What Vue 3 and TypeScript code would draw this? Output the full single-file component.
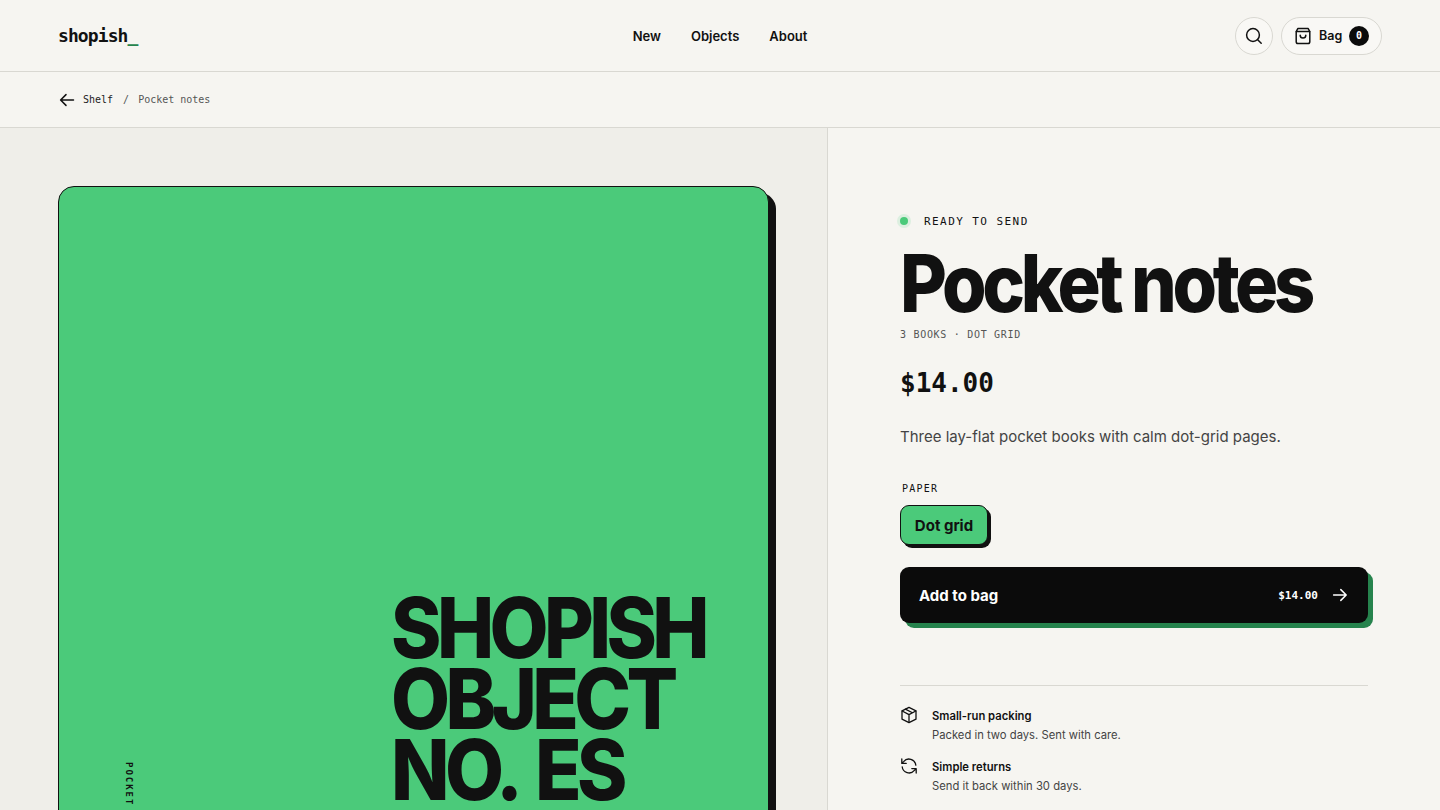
<script setup lang="ts">
import { ref } from 'vue'

interface Perk {
  title: string
  text: string
  icon: 'box' | 'refresh'
}

const navLinks = ref<string[]>(['New', 'Objects', 'About'])
const perks = ref<Perk[]>([
  { title: 'Small-run packing', text: 'Packed in two days. Sent with care.', icon: 'box' },
  { title: 'Simple returns', text: 'Send it back within 30 days.', icon: 'refresh' }
])
</script>

<template>
  <div class="page">
    <header class="topbar">
      <div class="logo">shopish<span>_</span></div>
      <nav class="nav">
        <a v-for="link in navLinks" :key="link">{{ link }}</a>
      </nav>
      <div class="actions">
        <button class="round" aria-label="Search">
          <svg width="18" height="18" viewBox="0 0 18 18" fill="none" stroke="currentColor" stroke-width="1.5" stroke-linecap="round">
            <circle cx="8" cy="8" r="6.4" />
            <path d="M12.7 12.7 16.2 16.2" />
          </svg>
        </button>
        <button class="bag">
          <svg width="18" height="18" viewBox="0 0 18 18" fill="none" stroke="currentColor" stroke-width="1.5" stroke-linecap="round" stroke-linejoin="round">
            <path d="M3.8 1.6h10.4l1.6 3v10.2a1.8 1.8 0 0 1-1.8 1.8H4a1.8 1.8 0 0 1-1.8-1.8V4.6z" />
            <path d="M2.4 4.6h13.2" />
            <path d="M6.2 8.2a2.8 2.8 0 0 0 5.6 0" />
          </svg>
          <span>Bag</span>
          <em>0</em>
        </button>
      </div>
    </header>

    <div class="crumbs">
      <svg width="18" height="18" viewBox="0 0 18 18" fill="none" stroke="currentColor" stroke-width="1.5" stroke-linecap="round" stroke-linejoin="round">
        <path d="M15.5 9H3M8 3.6 2.6 9 8 14.4" />
      </svg>
      <a>Shelf</a>
      <i>/</i>
      <b>Pocket notes</b>
    </div>

    <main class="product">
      <section class="stage">
        <div class="poster">
          <div class="spine">POCKET</div>
          <div class="poster-title">SHOPISH<br />OBJECT<br />NO. ES</div>
        </div>
      </section>

      <section class="details">
        <div class="status"><span class="dot"></span>READY TO SEND</div>
        <h1>Pocket notes</h1>
        <p class="meta">3 BOOKS · DOT GRID</p>
        <p class="price">$14.00</p>
        <p class="lead">Three lay-flat pocket books with calm dot-grid pages.</p>

        <div class="label">PAPER</div>
        <button class="chip">Dot grid</button>

        <button class="add">
          <span class="add-label">Add to bag</span>
          <span class="add-price">$14.00</span>
          <svg width="16" height="16" viewBox="0 0 16 16" fill="none" stroke="currentColor" stroke-width="1.5" stroke-linecap="round" stroke-linejoin="round">
            <path d="M1.6 8h12.4M8.8 2.6 14.2 8l-5.4 5.4" />
          </svg>
        </button>

        <ul class="perks">
          <li v-for="perk in perks" :key="perk.title">
            <svg v-if="perk.icon === 'box'" width="18" height="18" viewBox="0 0 18 18" fill="none" stroke="currentColor" stroke-width="1.3" stroke-linecap="round" stroke-linejoin="round">
              <path d="M9 1.4 16 4.8v8.4L9 16.6 2 13.2V4.8z" />
              <path d="M2.2 5 9 8.6 15.8 5M9 8.6v7.8M5.4 3.1l7 3.7" />
            </svg>
            <svg v-else width="18" height="18" viewBox="0 0 18 18" fill="none" stroke="currentColor" stroke-width="1.3" stroke-linecap="round" stroke-linejoin="round">
              <path d="M15.8 8.2A6.9 6.9 0 0 0 3.6 4.6L1.8 6.4M1.8 2v4.4h4.4" />
              <path d="M2.2 9.8a6.9 6.9 0 0 0 12.2 3.6l1.8-1.8M16.2 16v-4.4h-4.4" />
            </svg>
            <div>
              <strong>{{ perk.title }}</strong>
              <span>{{ perk.text }}</span>
            </div>
          </li>
        </ul>
      </section>
    </main>
  </div>
</template>

<style>
html,
body {
  margin: 0;
  background: #f6f5f1;
}
</style>

<style scoped>
.page {
  height: 810px;
  overflow: hidden;
  background: #f6f5f1;
  color: #111;
  font-family: Inter, "Noto Sans", sans-serif;
}

.topbar {
  height: 71px;
  padding: 0 58px;
  display: grid;
  grid-template-columns: 1fr auto 1fr;
  align-items: center;
  border-bottom: 1px solid #d9d8d2;
}

.logo {
  font-family: "DejaVu Sans Mono", "Liberation Mono", monospace;
  font-size: 18px;
  font-weight: 700;
  letter-spacing: -0.05em;
}

.logo span {
  color: #26834d;
}

.nav {
  display: flex;
  gap: 30px;
  font-size: 13px;
  font-weight: 600;
}

.actions {
  display: flex;
  justify-content: flex-end;
  gap: 8px;
}

.round,
.bag {
  height: 38px;
  border: 1px solid #d9d8d2;
  border-radius: 19px;
  background: #f9f8f5;
  color: #111;
  display: flex;
  align-items: center;
  font-family: inherit;
  padding: 0;
}

.round {
  width: 38px;
  justify-content: center;
}

.bag {
  padding: 0 12px;
  width: 101px;
  font-size: 12.5px;
  font-weight: 600;
}

.bag span {
  margin-left: 7px;
}

.bag em {
  margin-left: auto;
  width: 20px;
  height: 20px;
  border-radius: 50%;
  background: #0b0b0b;
  color: #fff;
  font-style: normal;
  font-family: "DejaVu Sans Mono", monospace;
  font-size: 10px;
  display: grid;
  place-items: center;
}

.crumbs {
  height: 55px;
  padding: 0 58px;
  display: flex;
  align-items: center;
  border-bottom: 1px solid #d9d8d2;
  font-family: "DejaVu Sans Mono", "Liberation Mono", monospace;
  font-size: 10px;
  color: #555;
}

.crumbs svg {
  color: #111;
}

.crumbs a {
  margin-left: 7px;
  color: #222;
}

.crumbs i {
  font-style: normal;
  margin: 0 9px 0 10px;
}

.crumbs b {
  font-weight: 400;
}

.product {
  display: grid;
  grid-template-columns: 828px 1fr;
  height: 682px;
}

.stage {
  background: #efeee9;
  border-right: 1px solid #d9d8d2;
  padding: 58px 58px 0;
}

.poster {
  width: 711px;
  height: 700px;
  box-sizing: border-box;
  border: 1px solid #111;
  border-radius: 16px;
  background: #4bca7a;
  box-shadow: 7px 7px 0 #111;
  padding: 0 0 0 65px;
  display: flex;
  align-items: flex-start;
  gap: 257px;
}

.poster-title {
  margin-top: 405px;
  font-size: 84px;
  font-weight: 800;
  line-height: 71px;
  letter-spacing: -0.06em;
  word-spacing: 0.1em;
  white-space: nowrap;
  color: #111;
  transform: scaleX(0.91);
  transform-origin: left;
}

.spine {
  margin-top: 575px;
  writing-mode: vertical-rl;
  font-family: "DejaVu Sans Mono", monospace;
  font-size: 9px;
  font-weight: 700;
  letter-spacing: 0.22em;
}

.details {
  padding: 87px 72px 0;
}

.status {
  display: flex;
  align-items: center;
  font-family: "DejaVu Sans Mono", monospace;
  font-size: 11px;
  font-weight: 500;
  letter-spacing: 0.13em;
  line-height: 14px;
}

.dot {
  width: 8px;
  height: 8px;
  margin: -2px 16px 0 0;
  border-radius: 50%;
  background: #4bca7a;
  box-shadow: 0 0 0 3px #dcefe0;
}

h1 {
  margin: 14px 0 0;
  font-size: 80px;
  font-weight: 800;
  line-height: 80px;
  letter-spacing: -0.06em;
  white-space: nowrap;
  transform: scaleX(0.9);
  transform-origin: left;
}

.meta {
  margin: 6px 0 0;
  font-family: "DejaVu Sans Mono", monospace;
  font-size: 10px;
  letter-spacing: 0.07em;
  color: #555;
}

.price {
  margin: 26px 0 0;
  font-family: "DejaVu Sans Mono", monospace;
  font-size: 26px;
  font-weight: 700;
  line-height: 34px;
}

.lead {
  margin: 25px 0 0;
  font-size: 15px;
  line-height: 24px;
  color: #444;
}

.label {
  margin: 33px 0 0 2px;
  font-family: "DejaVu Sans Mono", monospace;
  font-size: 10px;
  font-weight: 500;
  letter-spacing: 0.12em;
  line-height: 14px;
}

.chip {
  display: block;
  margin-top: 9px;
  height: 40px;
  width: 88px;
  padding: 0;
  border: 1px solid #111;
  border-radius: 9px;
  background: #4bca7a;
  box-shadow: 3px 3px 0 #111;
  color: #111;
  font-family: inherit;
  font-size: 15px;
  font-weight: 700;
}

.add {
  margin-top: 22px;
  width: 468px;
  height: 56px;
  padding: 0 20px 0 19px;
  border: 0;
  border-radius: 9px;
  background: #0b0b0b;
  box-shadow: 5px 5px 0 #26834d;
  color: #fff;
  display: flex;
  align-items: center;
  font-family: inherit;
}

.add-label {
  font-size: 15px;
  font-weight: 700;
}

.add-price {
  margin-left: auto;
  margin-right: 14px;
  font-family: "DejaVu Sans Mono", monospace;
  font-size: 11px;
  font-weight: 700;
}

.perks {
  list-style: none;
  margin: 62px 0 0;
  padding: 21px 0 0;
  border-top: 1px solid #d9d8d2;
  display: flex;
  flex-direction: column;
  gap: 13px;
}

.perks li {
  display: flex;
  gap: 14px;
}

.perks svg {
  margin-top: -1px;
}

.perks strong {
  display: block;
  font-size: 11.25px;
  font-weight: 600;
  line-height: 19px;
}

.perks span {
  display: block;
  font-size: 11.25px;
  line-height: 19px;
  color: #444;
}
</style>
